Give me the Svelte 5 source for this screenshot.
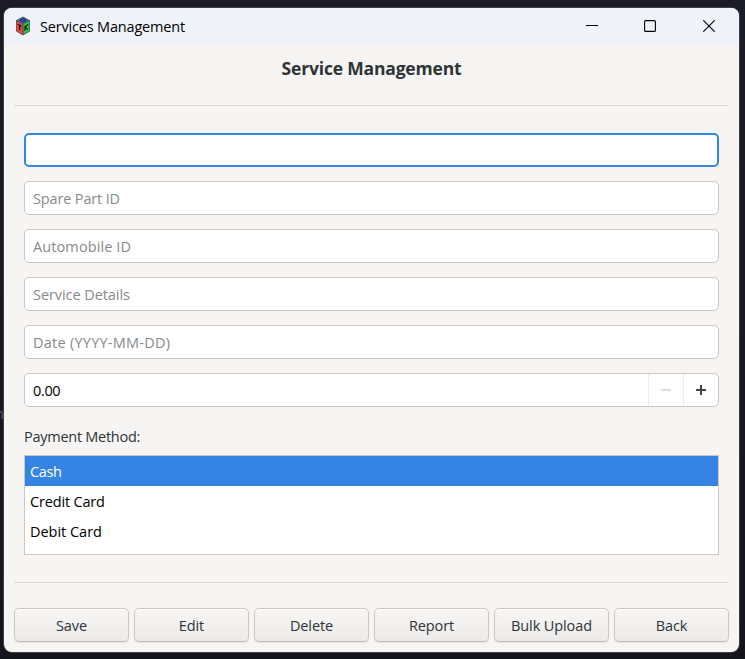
<script>
  const fields = [
    { hint: 'Spare Part ID', track: -0.15 },
    { hint: 'Automobile ID', track: 0.1 },
    { hint: 'Service Details', track: -0.07 },
    { hint: 'Date (YYYY-MM-DD)', track: 0.25 },
  ];
  const methods = [
    { name: 'Cash', track: -0.4 },
    { name: 'Credit Card', track: -0.17 },
    { name: 'Debit Card', track: -0.02 },
  ];
  const actions = ['Save', 'Edit', 'Delete', 'Report', 'Bulk Upload', 'Back'];
  let selected = $state('Cash');
</script>

<div class="desktop">
  <span class="behind">h</span>
  <main class="window">
    <header class="titlebar">
      <svg class="logo" width="16" height="20" viewBox="0 0 16 20">
        <path d="M8 1 14.500 4.500 8 8 1.500 4.500Z" fill="#3a6cc4" />
        <path d="M1.500 4.500 8 8V19L1.500 15.200Z" fill="#f04444" />
        <path d="M14.500 4.500 8 8V19l6.500-3.800Z" fill="#2cc838" />
        <path d="M8 1 14.500 4.500V15.200L8 19 1.500 15.200V4.500ZM1.500 4.500 8 8l6.500-3.500M8 8V19" fill="none" stroke="#33343c" stroke-width=".7" />
        <path d="M10.600 3.500 8 2.700 5 4.300 8 5.900 10.600 4.900 8.500 4.300" fill="none" stroke="#1b2c50" stroke-width="1" />
        <path d="M3 8.300l3.500 2M4.700 9.300v4.900M10 9.500v5.300M13 8l-2.800 3.700L13 13.300" fill="none" stroke="#141417" stroke-width="1.200" />
      </svg>
      <span class="caption">Services Management</span>
      <div class="controls">
        <svg width="12" height="12" viewBox="0 0 12 12"><path d="M0 5.500H12" /></svg>
        <svg width="12" height="12" viewBox="0 0 12 12"><rect x=".6" y=".6" width="10.800" height="10.800" rx="1" /></svg>
        <svg class="close" width="12" height="12" viewBox="0 0 12 12"><path d="M.3.300 11.700 11.700M11.700.300.3 11.700" /></svg>
      </div>
    </header>

    <h1>Service Management</h1>

    <form onsubmit={(e) => e.preventDefault()}>
      <div class="entry focused"></div>
      {#each fields as f}
        <div class="entry hint"><span style="letter-spacing: {f.track}px">{f.hint}</span></div>
      {/each}
      <div class="entry spin">
        <span class="amount">0.00</span>
        <span class="step off"><svg width="10" height="10" viewBox="0 0 10 10"><path d="M0 5H10" /></svg></span>
        <span class="step"><svg width="10" height="10" viewBox="0 0 10 10"><path d="M0 5H10M5 0V10" /></svg></span>
      </div>
    </form>

    <div class="label">Payment Method:</div>
    <ul>
      {#each methods as m}
        <li class:selected={selected === m.name}><span style="letter-spacing: {m.track}px">{m.name}</span></li>
      {/each}
    </ul>

    <footer>
      {#each actions as a}
        <button type="button">{a}</button>
      {/each}
    </footer>
  </main>
</div>

<style>
  .desktop {
    position: relative;
    box-sizing: border-box;
    width: 745px;
    height: 659px;
    padding: 8px 6px 7px 4px;
    background: linear-gradient(#1b1b27, #14141c);
    font: 14.5px/20px 'Open Sans', 'Noto Sans', sans-serif;
    letter-spacing: -0.35px;
    color: #2e3436;
    overflow: hidden;
  }
  .behind {
    position: absolute;
    left: -5px;
    top: 404px;
    color: #5a5a64;
  }
  .window {
    position: relative;
    height: 644px;
    border-radius: 8px;
    background: #f6f5f4;
    box-shadow: 0 0 0 1px #403f46;
    overflow: hidden;
  }
  .titlebar {
    display: flex;
    align-items: center;
    box-sizing: border-box;
    height: 37px;
    padding-left: 11px;
    background: #eff3f9;
    color: #000;
  }
  .logo {
    flex: none;
    margin: 0 9px 1px 0;
  }
  .caption {
    letter-spacing: -0.18px;
  }
  .controls {
    display: flex;
    gap: 46px;
    margin: 0 24px 1px auto;
  }
  .controls svg {
    fill: none;
    stroke: #000;
    stroke-width: 1.1;
  }
  .controls .close {
    margin-left: 1px;
  }
  h1 {
    box-sizing: border-box;
    height: 61px;
    margin: 0 10px;
    padding-top: 13px;
    border-bottom: 1px solid #dbdad8;
    font-size: 17.5px;
    line-height: 20px;
    font-weight: 700;
    letter-spacing: -0.18px;
    text-align: center;
  }
  form {
    display: flex;
    flex-direction: column;
    gap: 14px;
    margin: 27px 20px 0;
  }
  .entry {
    display: flex;
    align-items: center;
    box-sizing: border-box;
    height: 34px;
    padding-left: 8px;
    border: 1px solid #cdc7c2;
    border-radius: 5px;
    background: #fff;
  }
  .focused {
    border: 2px solid #3584e4;
  }
  .hint {
    padding-top: 2px;
    color: #888a8b;
  }
  .amount {
    flex: 1;
    padding-top: 2px;
    color: #000;
  }
  .step {
    display: flex;
    align-items: center;
    justify-content: center;
    box-sizing: border-box;
    width: 35px;
    height: 32px;
    border-left: 1px solid #ececeb;
  }
  .step svg {
    fill: none;
    stroke: #414648;
    stroke-width: 2;
  }
  .off svg {
    stroke: #dddedd;
  }
  .label {
    margin: 20px 20px 8px;
    letter-spacing: -0.27px;
  }
  ul {
    box-sizing: border-box;
    height: 100px;
    margin: 0 20px 27px;
    padding: 0;
    border: 1px solid #cdc7c2;
    background: #fff;
    color: #000;
    list-style: none;
  }
  li {
    height: 30px;
    padding-left: 5px;
    line-height: 31px;
  }
  li.selected {
    background: #3584e4;
    color: #fff;
  }
  footer {
    display: flex;
    gap: 5px;
    margin: 0 10px;
    padding-top: 25px;
    border-top: 1px solid #dbdad8;
  }
  button {
    box-sizing: border-box;
    flex: 1;
    height: 34px;
    padding: 2px 0 0;
    border: 1px solid #cdc7c2;
    border-bottom-color: #bfb8b1;
    border-radius: 5px;
    background: linear-gradient(#f6f5f4 10%, #edebe9);
    box-shadow: inset 0 1px #fff, 0 1px 2px rgb(0 0 0 / 7%);
    color: #2e3436;
    font: inherit;
    letter-spacing: -0.1px;
    white-space: nowrap;
  }
</style>
